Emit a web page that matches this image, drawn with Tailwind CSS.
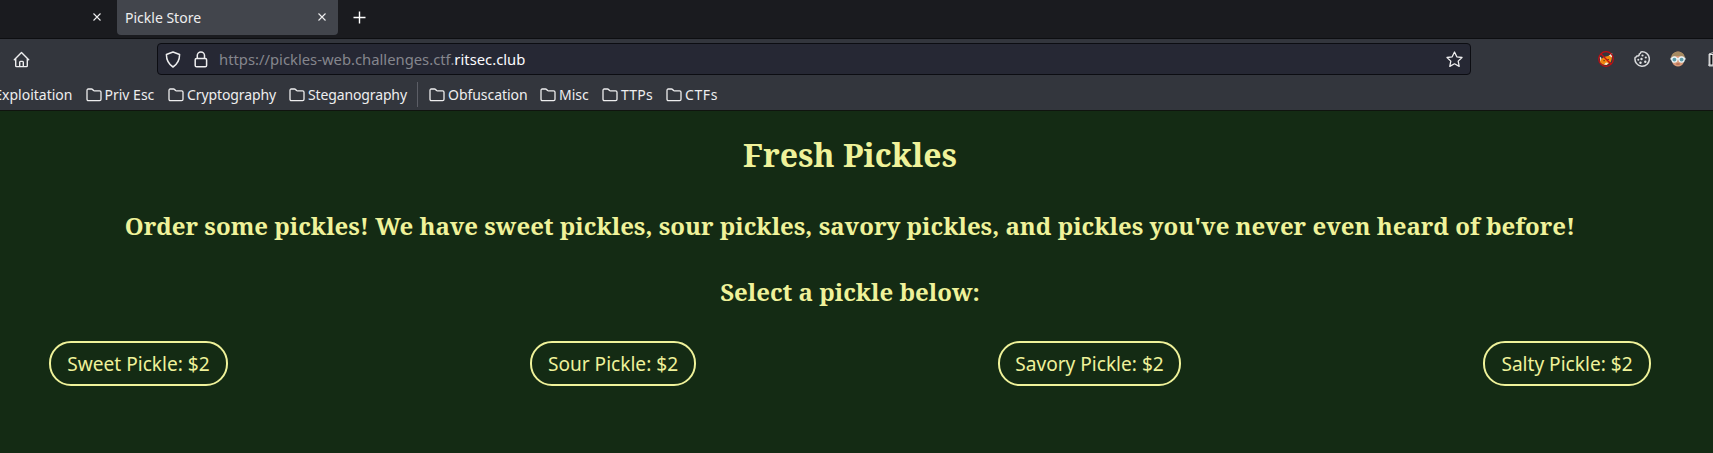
<!DOCTYPE html>
<html lang="en">
<head>
<meta charset="utf-8">
<title>Pickle Store</title>
<script src="https://cdn.jsdelivr.net/npm/@tailwindcss/browser@4"></script>
</head>
<body class="flex h-[453px] w-[1713px] flex-col overflow-hidden bg-[#142b14] font-['Noto_Sans',sans-serif] text-[14px] text-[#eeeeef]">

<svg class="hidden">
  <symbol id="folder" viewBox="0 0 16 14"><path d="M1 11.2V2.4C1 1.6 1.5 1 2.3 1h3.2c.5 0 .8.2 1.1.5l.9 1c.2.3.5.4.9.4h5.2c.8 0 1.4.6 1.4 1.4v6.9c0 .8-.6 1.4-1.4 1.4H2.3C1.5 12.600 1 12 1 11.200z" fill="none" stroke="currentColor" stroke-width="1.3"/></symbol>
  <symbol id="close" viewBox="0 0 8 8"><path d="M.5.5l7 7M7.500.5l-7 7" fill="none" stroke="currentColor" stroke-width="1.100"/></symbol>
</svg>

<!-- Tab strip -->
<header class="flex h-[39px] shrink-0 items-start border-b border-[#0d0e11] bg-[#1a1b1f]">
  <div class="flex h-[34px] w-[117px] items-center justify-end pr-4">
    <svg class="size-2"><use href="#close"/></svg>
  </div>
  <div class="flex h-[35px] w-[221px] items-center justify-between rounded-b bg-[#42454c] pr-3 pb-px pl-2">
    <span class="pt-0.5 leading-5">Pickle Store</span>
    <svg class="size-2"><use href="#close"/></svg>
  </div>
  <svg class="mt-[11px] ml-[15px] size-[13px]" viewBox="0 0 13 13"><path d="M6.500.5v12M.5 6.500h12" stroke="white" stroke-width="1.400"/></svg>
</header>

<!-- Navigation toolbar -->
<nav class="flex h-[40px] shrink-0 items-center bg-[#33363d]">
  <svg class="ml-[13px] size-[17px] shrink-0" viewBox="0 0 17 17" fill="none" stroke="currentColor" stroke-width="1.400" stroke-linejoin="round" stroke-linecap="round"><path d="M1.300 8.700L8.500 1.500l7.200 7.200M2.700 7.500v7.200c0 .5.4.9.9.9h9.800c.5 0 .9-.4.9-.9V7.500M6.700 15.500v-4.300c0-.5.3-.8.8-.8h2c.5 0 .8.3.8.8v4.300"/></svg>
  <div class="ml-[127px] flex h-8 w-[1314px] shrink-0 items-center rounded border border-[#0c0d12] bg-[#262834] pr-[7px] pl-[7px]">
    <svg class="size-[17px]" viewBox="0 0 17 17" fill="none" stroke="currentColor" stroke-width="1.500" stroke-linejoin="round"><path d="M8 1l6.600 2.500c0 4.800-1.300 9-6.600 12.500C2.700 12.500 1.400 8.300 1.400 3.500z"/></svg>
    <svg class="ml-[10px] size-[17px]" viewBox="0 0 17 17" fill="none" stroke="currentColor" stroke-width="1.500"><rect x="3.200" y="7.400" width="11.400" height="8.400" rx="1.400"/><path d="M5.300 7.400V4.600a3.600 3.600 0 0 1 7.200 0v2.800"/></svg>
    <span class="ml-[10px] text-[14.8px] leading-5 whitespace-nowrap text-[#85868d]">https://pickles-web.challenges.ctf.<span class="text-[#fbfbfe]">ritsec.club</span></span>
    <svg class="ml-auto size-[17px]" viewBox="0 0 17 17" fill="none" stroke="currentColor" stroke-width="1.300" stroke-linejoin="round"><path d="M8.500 1l2.300 4.800 5.200.7-3.800 3.600 1 5.300-4.700-2.600-4.700 2.600 1-5.300L1 6.500l5.200-.7z"/></svg>
  </div>
  <div class="ml-[127px] flex shrink-0 items-center gap-5">
    <!-- Crossed-out fox -->
    <svg class="size-4" viewBox="0 0 16 16"><path d="M2 9l4-3 4-1 4-2-.3 5-1 3-4 3-4-.5-2.500-2z" fill="#f0870f"/><path d="M1.200 5l2.300 2-.8 3.500zM11 4.500l3.200-2.500-.3 4.500zM6 13.500l2-2 2.500.5-2 2z" fill="#f4ead8"/><path d="M5.500 9.700h1.200M9.500 8.500h1.200" stroke="#3b2414"/><circle cx="8" cy="8" r="7.300" fill="none" stroke="#c50d12" stroke-width="1.200"/><path d="M2.800 2.800l10.400 10.400" stroke="#c50d12" stroke-width="1.300"/></svg>
    <!-- Cookie -->
    <svg class="size-4" viewBox="0 0 16 16"><path d="M7 .9c-.2 1.100-.7 1.800-1.700 2 .1 1.500-.8 2.300-2.500 2.200-.3.900-.9 1.300-1.700 1.500A7.200 7.200 0 1 0 7 .9z" fill="none" stroke="#d9dadc" stroke-width="1.500" stroke-linejoin="round"/><g fill="#e2e3e4"><circle cx="8.500" cy="4.500" r="1.100"/><circle cx="11.800" cy="6.500" r="1.100"/><circle cx="7.500" cy="8" r="1.200"/><circle cx="4.300" cy="8.800" r="1"/><circle cx="11.300" cy="10.700" r="1.200"/><circle cx="6.500" cy="11.700" r="1.200"/></g></svg>
    <!-- Face with goggles -->
    <svg class="size-4" viewBox="0 0 16 16"><path d="M1.500 7a6.500 6.500 0 0 1 13 0l-1 5c-1 2-3 3.500-5.500 3.500S3.500 14 2.500 12z" fill="#d99a78"/><path d="M1.200 7.500C1.200 3 4 .8 8 .8s6.800 2.200 6.800 6.700L12 5H4z" fill="#a58a62"/><path d="M.5 7.800h15" stroke="#e8eef0" stroke-width="2"/><circle cx="4.400" cy="8.600" r="2.600" fill="#5d9ba9" stroke="#eaf3f4" stroke-width="1.300"/><circle cx="11.600" cy="8.600" r="2.600" fill="#5d9ba9" stroke="#eaf3f4" stroke-width="1.300"/><path d="M6.300 13h3.400" stroke="#a2543f"/></svg>
    <!-- Archive building, cut by the window edge -->
    <svg class="ml-0.5 size-4 shrink-0" viewBox="0 0 16 16"><path d="M1 3l7-2.500L15 3v12H1z" fill="#101114" stroke="#c9cacc"/><path d="M1.800 4v10M5 4v10M8.500 4v10M.5 14.200h15M1 3.400h14" stroke="#e4e5e6" stroke-width="1.300"/></svg>
  </div>
</nav>

<!-- Bookmarks bar -->
<nav class="flex h-[32px] shrink-0 items-center border-b border-[#10140f] bg-[#33363d] whitespace-nowrap">
  <span class="flex w-[72.5px] justify-end">Exploitation</span>
  <span class="ml-[13px] flex w-[82.5px] items-center gap-[3px]"><svg class="h-[14px] w-4"><use href="#folder"/></svg>Priv Esc</span>
  <span class="flex w-[121px] items-center gap-[3px] tracking-[-0.1px]"><svg class="h-[14px] w-4"><use href="#folder"/></svg>Cryptography</span>
  <span class="flex w-[128px] items-center gap-[3px] tracking-[-0.13px]"><svg class="h-[14px] w-4"><use href="#folder"/></svg>Steganography</span>
  <span class="h-[25px] w-px bg-[#5c5e66]"></span>
  <span class="ml-[11px] flex w-[111px] items-center gap-[3px] tracking-[-0.05px]"><svg class="h-[14px] w-4"><use href="#folder"/></svg>Obfuscation</span>
  <span class="flex w-[62px] items-center gap-[3px]"><svg class="h-[14px] w-4"><use href="#folder"/></svg>Misc</span>
  <span class="flex w-[64px] items-center gap-[3px] tracking-[0.2px]"><svg class="h-[14px] w-4"><use href="#folder"/></svg>TTPs</span>
  <span class="flex items-center gap-[3px] tracking-[0.6px]"><svg class="h-[14px] w-4"><use href="#folder"/></svg>CTFs</span>
</nav>

<!-- Page content -->
<main class="flex w-[1700px] grow flex-col items-center pt-[22px] text-[#eff29a]">
  <h1 class="font-['Noto_Serif',serif] text-[32px] leading-[44px] font-bold">Fresh Pickles</h1>
  <h3 class="mt-8 font-['Noto_Serif',serif] text-2xl leading-[33px] font-bold whitespace-nowrap">Order some pickles! We have sweet pickles, sour pickles, savory pickles, and pickles you've never even heard of before!</h3>
  <h3 class="mt-[33px] font-['Noto_Serif',serif] text-2xl leading-[33px] font-bold">Select a pickle below:</h3>
  <div class="mt-[33px] flex w-[1602px] justify-between text-[19.1px] leading-[39px]">
    <button class="h-[45px] w-[179px] rounded-[22px] border-2 border-[#eff29a] pt-px whitespace-nowrap">Sweet Pickle: $2</button>
    <button class="h-[45px] w-[166px] rounded-[22px] border-2 border-[#eff29a] pt-px whitespace-nowrap">Sour Pickle: $2</button>
    <button class="h-[45px] w-[183px] rounded-[22px] border-2 border-[#eff29a] pt-px whitespace-nowrap">Savory Pickle: $2</button>
    <button class="h-[45px] w-[168px] rounded-[22px] border-2 border-[#eff29a] pt-px whitespace-nowrap">Salty Pickle: $2</button>
  </div>
</main>
</body>
</html>
